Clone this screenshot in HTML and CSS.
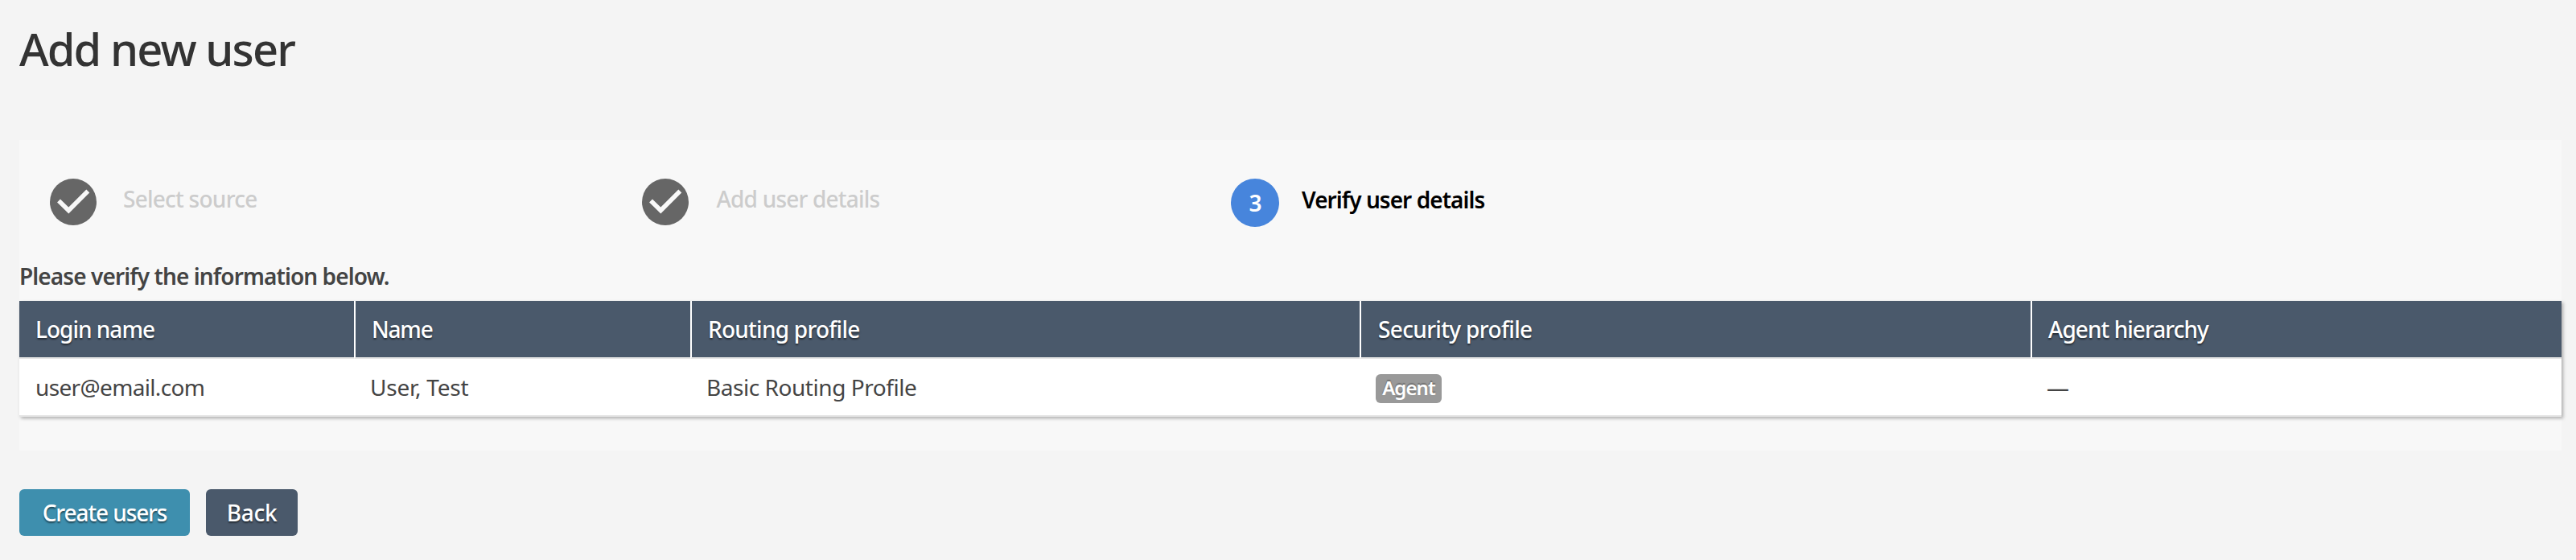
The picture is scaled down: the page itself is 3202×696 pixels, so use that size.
FILE: index.html
```html
<!DOCTYPE html>
<html lang="en">
<head>
<meta charset="utf-8">
<title>Add new user</title>
<link rel="stylesheet" href="styles.css">
</head>
<body>
<main class="page">
  <h1 class="title">Add new user</h1>
  <section class="panel">
    <ol class="steps">
      <li class="step">
        <svg class="step-icon" viewBox="0 0 58 58"><circle cx="29" cy="29" r="29" fill="#666"/><path d="M11 27.5 23.3 39.5 47.3 15.5" fill="none" stroke="#f8f8f8" stroke-width="5.6"/></svg>
        <span class="step-label">Select source</span>
      </li>
      <li class="step step-details">
        <svg class="step-icon" viewBox="0 0 58 58"><circle cx="29" cy="29" r="29" fill="#666"/><path d="M11 27.5 23.3 39.5 47.3 15.5" fill="none" stroke="#f8f8f8" stroke-width="5.6"/></svg>
        <span class="step-label">Add user details</span>
      </li>
      <li class="step step-current">
        <span class="step-number">3</span>
        <span class="step-label">Verify user details</span>
      </li>
    </ol>
    <p class="hint">Please verify the information below.</p>
    <table class="users">
      <colgroup><col class="col-login"><col class="col-name"><col class="col-routing"><col class="col-security"><col></colgroup>
      <thead>
        <tr><th class="h-login">Login name</th><th class="h-name">Name</th><th>Routing profile</th><th class="h-security">Security profile</th><th class="h-agent">Agent hierarchy</th></tr>
      </thead>
      <tbody>
        <tr><td class="d-login">user@email.com</td><td class="d-name">User, Test</td><td class="d-routing">Basic Routing Profile</td><td><span class="badge">Agent</span></td><td>—</td></tr>
      </tbody>
    </table>
  </section>
  <div class="actions">
    <button class="btn btn-primary" type="button">Create users</button>
    <button class="btn btn-back" type="button">Back</button>
  </div>
</main>
</body>
</html>
```

FILE: styles.css
```css
* { box-sizing: border-box; }
body {
  margin: 0;
  background: #f4f4f4;
  color: #444;
  font-family: "Noto Sans", "Open Sans", sans-serif;
  font-size: 28px;
}
.page { padding: 22px 18px 0 24px; }
.title {
  margin: 0;
  height: 152px;
  line-height: 77px;
  font-size: 56px;
  font-weight: 500;
  letter-spacing: -1.9px;
  color: #333;
}
.panel { height: 386px; background: #f8f8f8; }
.steps {
  display: grid;
  grid-template-columns: 735.5px 732.5px auto;
  height: 148px;
  margin: 0;
  padding: 48px 0 0 38px;
  list-style: none;
}
.step { display: flex; gap: 33px; color: #ccc; font-weight: 500; letter-spacing: -.75px; }
.step-details { gap: 35px; letter-spacing: -.8px; }
.step-icon { width: 58px; height: 58px; }
.step-label { height: 50px; line-height: 50px; white-space: nowrap; }
.step-current { gap: 28px; color: #000; letter-spacing: -.95px; font-weight: 600; }
.step-current .step-label { line-height: 52px; }
.step-number {
  width: 60px;
  height: 60px;
  border-radius: 50%;
  background: #4785dc;
  color: #fff;
  line-height: 60px;
  text-align: center;
}
.hint {
  margin: 0;
  height: 52px;
  line-height: 43px;
  font-weight: 600;
  letter-spacing: -.9px;
  white-space: nowrap;
}
.users {
  width: 3160px;
  table-layout: fixed;
  border-spacing: 0;
  background: #fff;
  box-shadow: 2px 2px 4px rgba(0, 0, 0, .3);
}
.col-login { width: 416px; }
.col-name { width: 418px; }
.col-routing { width: 832px; }
.col-security { width: 834px; }
.users th, .users td {
  height: 72px;
  padding: 0 20px;
  border-bottom: 2px solid #e5e5e5;
  text-align: left;
  line-height: 70px;
  white-space: nowrap;
}
.users th {
  background: #4a596b;
  background-clip: padding-box;
  color: #fff;
  font-weight: 500;
  letter-spacing: -.75px;
  text-shadow: 0 2px 2px rgba(0, 0, 0, .5);
}
.users th + th { border-left: 2px solid #fff; }
.users .h-login { letter-spacing: -1px; }
.users .h-name { letter-spacing: -1.2px; }
.users .h-security { padding-left: 21px; letter-spacing: -.65px; }
.users .h-agent { letter-spacing: -.95px; }
.d-login { letter-spacing: -.65px; }
.d-name { letter-spacing: -.2px; }
.d-routing { letter-spacing: -.45px; }
.badge {
  display: block;
  width: 82px;
  height: 36px;
  margin-top: 4px;
  border-radius: 6px;
  background: #999;
  color: #fff;
  font-size: 24px;
  font-weight: 600;
  letter-spacing: -.9px;
  line-height: 34px;
  text-align: center;
  text-shadow: 0 -2px 1px rgba(0, 0, 0, .25);
}
.actions { display: flex; gap: 20px; padding-top: 48px; }
.btn {
  height: 58px;
  padding: 0;
  border: 0;
  border-radius: 6px;
  color: #fff;
  font: inherit;
  font-weight: 500;
  line-height: 58px;
  text-shadow: 0 2px 2px rgba(0, 0, 0, .5);
}
.btn-primary { width: 212px; background: #3e8fae; letter-spacing: -1.1px; }
.btn-back { width: 114px; background: #4a596b; letter-spacing: -.3px; }
```
